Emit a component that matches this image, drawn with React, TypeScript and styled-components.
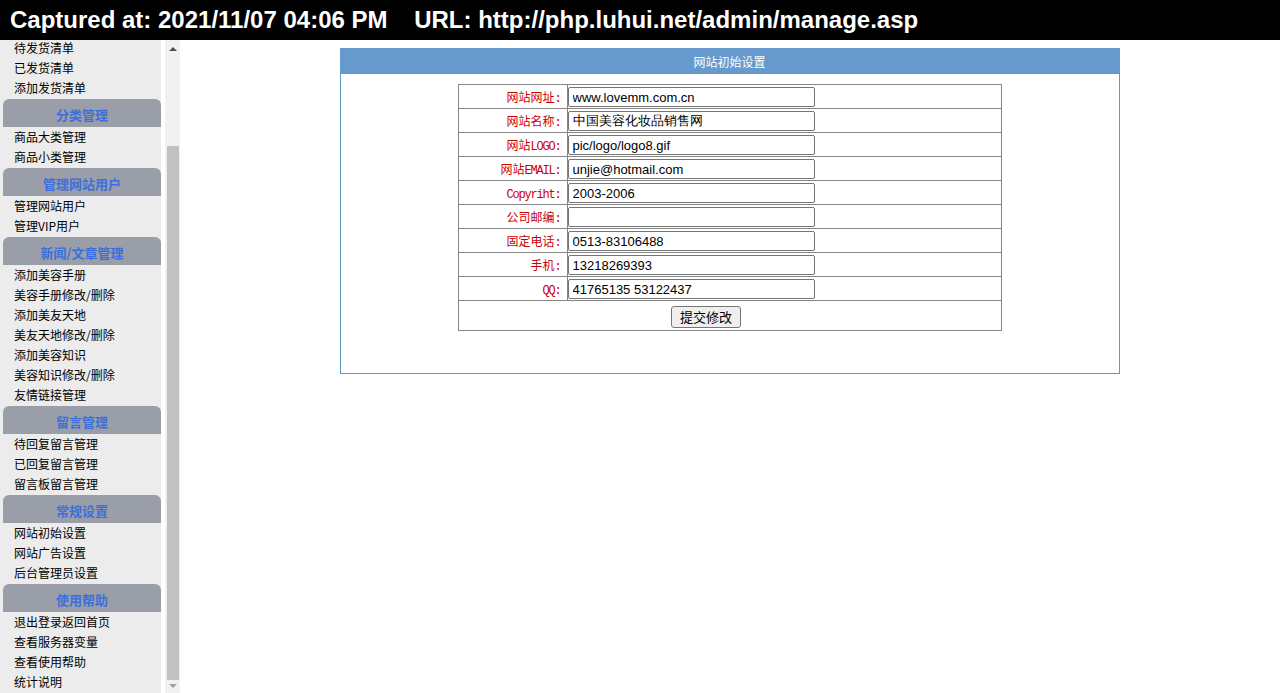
import styled, { createGlobalStyle } from "styled-components";

const GlobalStyle = createGlobalStyle`
  html, body {
    margin: 0;
    padding: 0;
    background: #ffffff;
    overflow: hidden;
  }
  body {
    font-family: "Noto Sans CJK SC", "Liberation Sans", sans-serif;
    font-size: 12px;
    color: #000000;
  }
`;

type MenuSection = {
  title?: string;
  items: string[];
};

const menu: MenuSection[] = [
  { items: ["待发货清单", "已发货清单", "添加发货清单"] },
  { title: "分类管理", items: ["商品大类管理", "商品小类管理"] },
  { title: "管理网站用户", items: ["管理网站用户", "管理VIP用户"] },
  {
    title: "新闻/文章管理",
    items: [
      "添加美容手册",
      "美容手册修改/删除",
      "添加美友天地",
      "美友天地修改/删除",
      "添加美容知识",
      "美容知识修改/删除",
      "友情链接管理",
    ],
  },
  { title: "留言管理", items: ["待回复留言管理", "已回复留言管理", "留言板留言管理"] },
  { title: "常规设置", items: ["网站初始设置", "网站广告设置", "后台管理员设置"] },
  {
    title: "使用帮助",
    items: ["退出登录返回首页", "查看服务器变量", "查看使用帮助", "统计说明"],
  },
];

type Field = {
  label: string;
  value: string;
};

const fields: Field[] = [
  { label: "网站网址:", value: "www.lovemm.com.cn" },
  { label: "网站名称:", value: "中国美容化妆品销售网" },
  { label: "网站LOGO:", value: "pic/logo/logo8.gif" },
  { label: "网站EMAIL:", value: "unjie@hotmail.com" },
  { label: "Copyriht:", value: "2003-2006" },
  { label: "公司邮编:", value: "" },
  { label: "固定电话:", value: "0513-83106488" },
  { label: "手机:", value: "13218269393" },
  { label: "QQ:", value: "41765135 53122437" },
];

const Page = styled.div`
  width: 1280px;
  height: 693px;
  display: flex;
  flex-direction: column;
`;

const CaptureBar = styled.div`
  height: 40px;
  flex: none;
  background: #000000;
  color: #ffffff;
  font-family: "Liberation Sans", Arial, sans-serif;
  font-weight: bold;
  font-size: 24px;
  line-height: 40px;
  padding-left: 10px;
  white-space: pre;
`;

const Body = styled.div`
  flex: 1;
  display: flex;
  min-height: 0;
`;

const SideFrame = styled.div`
  width: 180px;
  flex: none;
  display: flex;
  background: #ffffff;
`;

const MenuColumn = styled.div`
  width: 161px;
  background: #ececec;
  overflow: hidden;
`;

const MenuList = styled.div`
  margin-top: -2px;
`;

const MenuHeader = styled.div`
  margin: 1px 0 0 3px;
  height: 28px;
  box-sizing: border-box;
  padding-top: 3px;
  display: flex;
  align-items: center;
  justify-content: center;
  background: #9a9ea9;
  border-radius: 6px 6px 0 0;
  color: #3d6fdc;
  font-weight: bold;
  font-size: 13px;
`;

const MenuItem = styled.div`
  height: 20px;
  line-height: 20px;
  padding-left: 14px;
  font-size: 12px;
  color: #000000;
  white-space: nowrap;
`;

const ScrollTrack = styled.div`
  width: 15px;
  margin-left: 4px;
  background: #f1f1f1;
  display: flex;
  flex-direction: column;
  align-items: center;
`;

const ScrollArrow = styled.div<{ $down?: boolean; $dim?: boolean }>`
  width: 0;
  height: 0;
  margin: ${(p) => (p.$down ? "4px 0 5px" : "7px 0 0")};
  border-left: 4px solid transparent;
  border-right: 4px solid transparent;
  ${(p) =>
    p.$down
      ? `border-top: 4px solid ${p.$dim ? "#a3a3a3" : "#505050"};`
      : `border-bottom: 4px solid ${p.$dim ? "#a3a3a3" : "#505050"};`}
`;

const ScrollSpace = styled.div`
  flex: 1;
  width: 100%;
  display: flex;
  flex-direction: column;
  align-items: center;
`;

const ScrollThumb = styled.div`
  width: 12px;
  margin-top: 95px;
  flex: 1;
  background: #c1c1c1;
`;

const Main = styled.div`
  flex: 1;
  padding-top: 8px;
  display: flex;
  justify-content: center;
  align-items: flex-start;
`;

const Panel = styled.div`
  width: 780px;
  box-sizing: border-box;
  border: 1px solid #5e9cc4;
  background: #ffffff;
  margin-left: -1px;
`;

const PanelTitle = styled.div`
  height: 26px;
  margin: -1px -1px 0;
  background: #6699cc;
  color: #ffffff;
  font-size: 12px;
  line-height: 27px;
  text-align: center;
`;

const PanelBody = styled.div`
  padding: 10px 0 42px;
  display: flex;
  justify-content: center;
`;

const FormTable = styled.table`
  width: 544px;
  border-collapse: collapse;
  border: 1px solid #858585;
`;

const LabelCell = styled.td`
  width: 102px;
  border: 1px solid #858585;
  padding: 2px 6px 1px 0;
  text-align: right;
  color: #cc0000;
  font-size: 12px;
  white-space: nowrap;
`;

// ascii runs inside the labels are set half-width, as the CJK system font draws them
const Latin = styled.span`
  font-family: "Liberation Mono", "DejaVu Sans Mono", monospace;
  font-size: 12px;
  letter-spacing: -1.2px;
`;

const ValueCell = styled.td`
  border: 1px solid #858585;
  padding: 2px 1px 1px 0;
`;

const TextInput = styled.input`
  display: block;
  width: 247px;
  height: 20px;
  box-sizing: border-box;
  border: 1px solid #767676;
  border-radius: 2px;
  padding: 1px 4px;
  font-family: "Liberation Sans", Arial, sans-serif;
  font-size: 13px;
  color: #000000;
  background: #ffffff;
`;

const ActionCell = styled.td`
  border: 1px solid #858585;
  padding: 4px 47px 2px 0;
  text-align: center;
  height: 23px;
`;

const SubmitButton = styled.button`
  width: 70px;
  height: 22px;
  border: 1px solid #767676;
  border-radius: 3px;
  background: #efefef;
  font-family: "Noto Sans CJK SC", "Liberation Sans", sans-serif;
  font-size: 13px;
  color: #000000;
  padding: 0;
`;

// splits a label into CJK text and ascii runs so the ascii part stays half-width
const renderLabel = (label: string) =>
  label.split(/([\x20-\x7e]+)/).map((part, i) =>
    /^[\x20-\x7e]+$/.test(part) ? <Latin key={i}>{part}</Latin> : part
  );

export default function App() {
  return (
    <Page>
      <GlobalStyle />
      <CaptureBar>
        {"Captured at: 2021/11/07 04:06 PM    URL: http://php.luhui.net/admin/manage.asp"}
      </CaptureBar>
      <Body>
        <SideFrame>
          <MenuColumn>
            <MenuList>
              {menu.map((section, i) => (
                <div key={i}>
                  {section.title && <MenuHeader>{section.title}</MenuHeader>}
                  {section.items.map((item) => (
                    <MenuItem key={item}>{item}</MenuItem>
                  ))}
                </div>
              ))}
            </MenuList>
          </MenuColumn>
          <ScrollTrack>
            <ScrollArrow />
            <ScrollSpace>
              <ScrollThumb />
            </ScrollSpace>
            <ScrollArrow $down $dim />
          </ScrollTrack>
        </SideFrame>
        <Main>
          <Panel>
            <PanelTitle>网站初始设置</PanelTitle>
            <PanelBody>
              <FormTable>
                <tbody>
                  {fields.map((f) => (
                    <tr key={f.label}>
                      <LabelCell>{renderLabel(f.label)}</LabelCell>
                      <ValueCell>
                        <TextInput type="text" defaultValue={f.value} />
                      </ValueCell>
                    </tr>
                  ))}
                  <tr>
                    <ActionCell colSpan={2}>
                      <SubmitButton type="button">提交修改</SubmitButton>
                    </ActionCell>
                  </tr>
                </tbody>
              </FormTable>
            </PanelBody>
          </Panel>
        </Main>
      </Body>
    </Page>
  );
}
